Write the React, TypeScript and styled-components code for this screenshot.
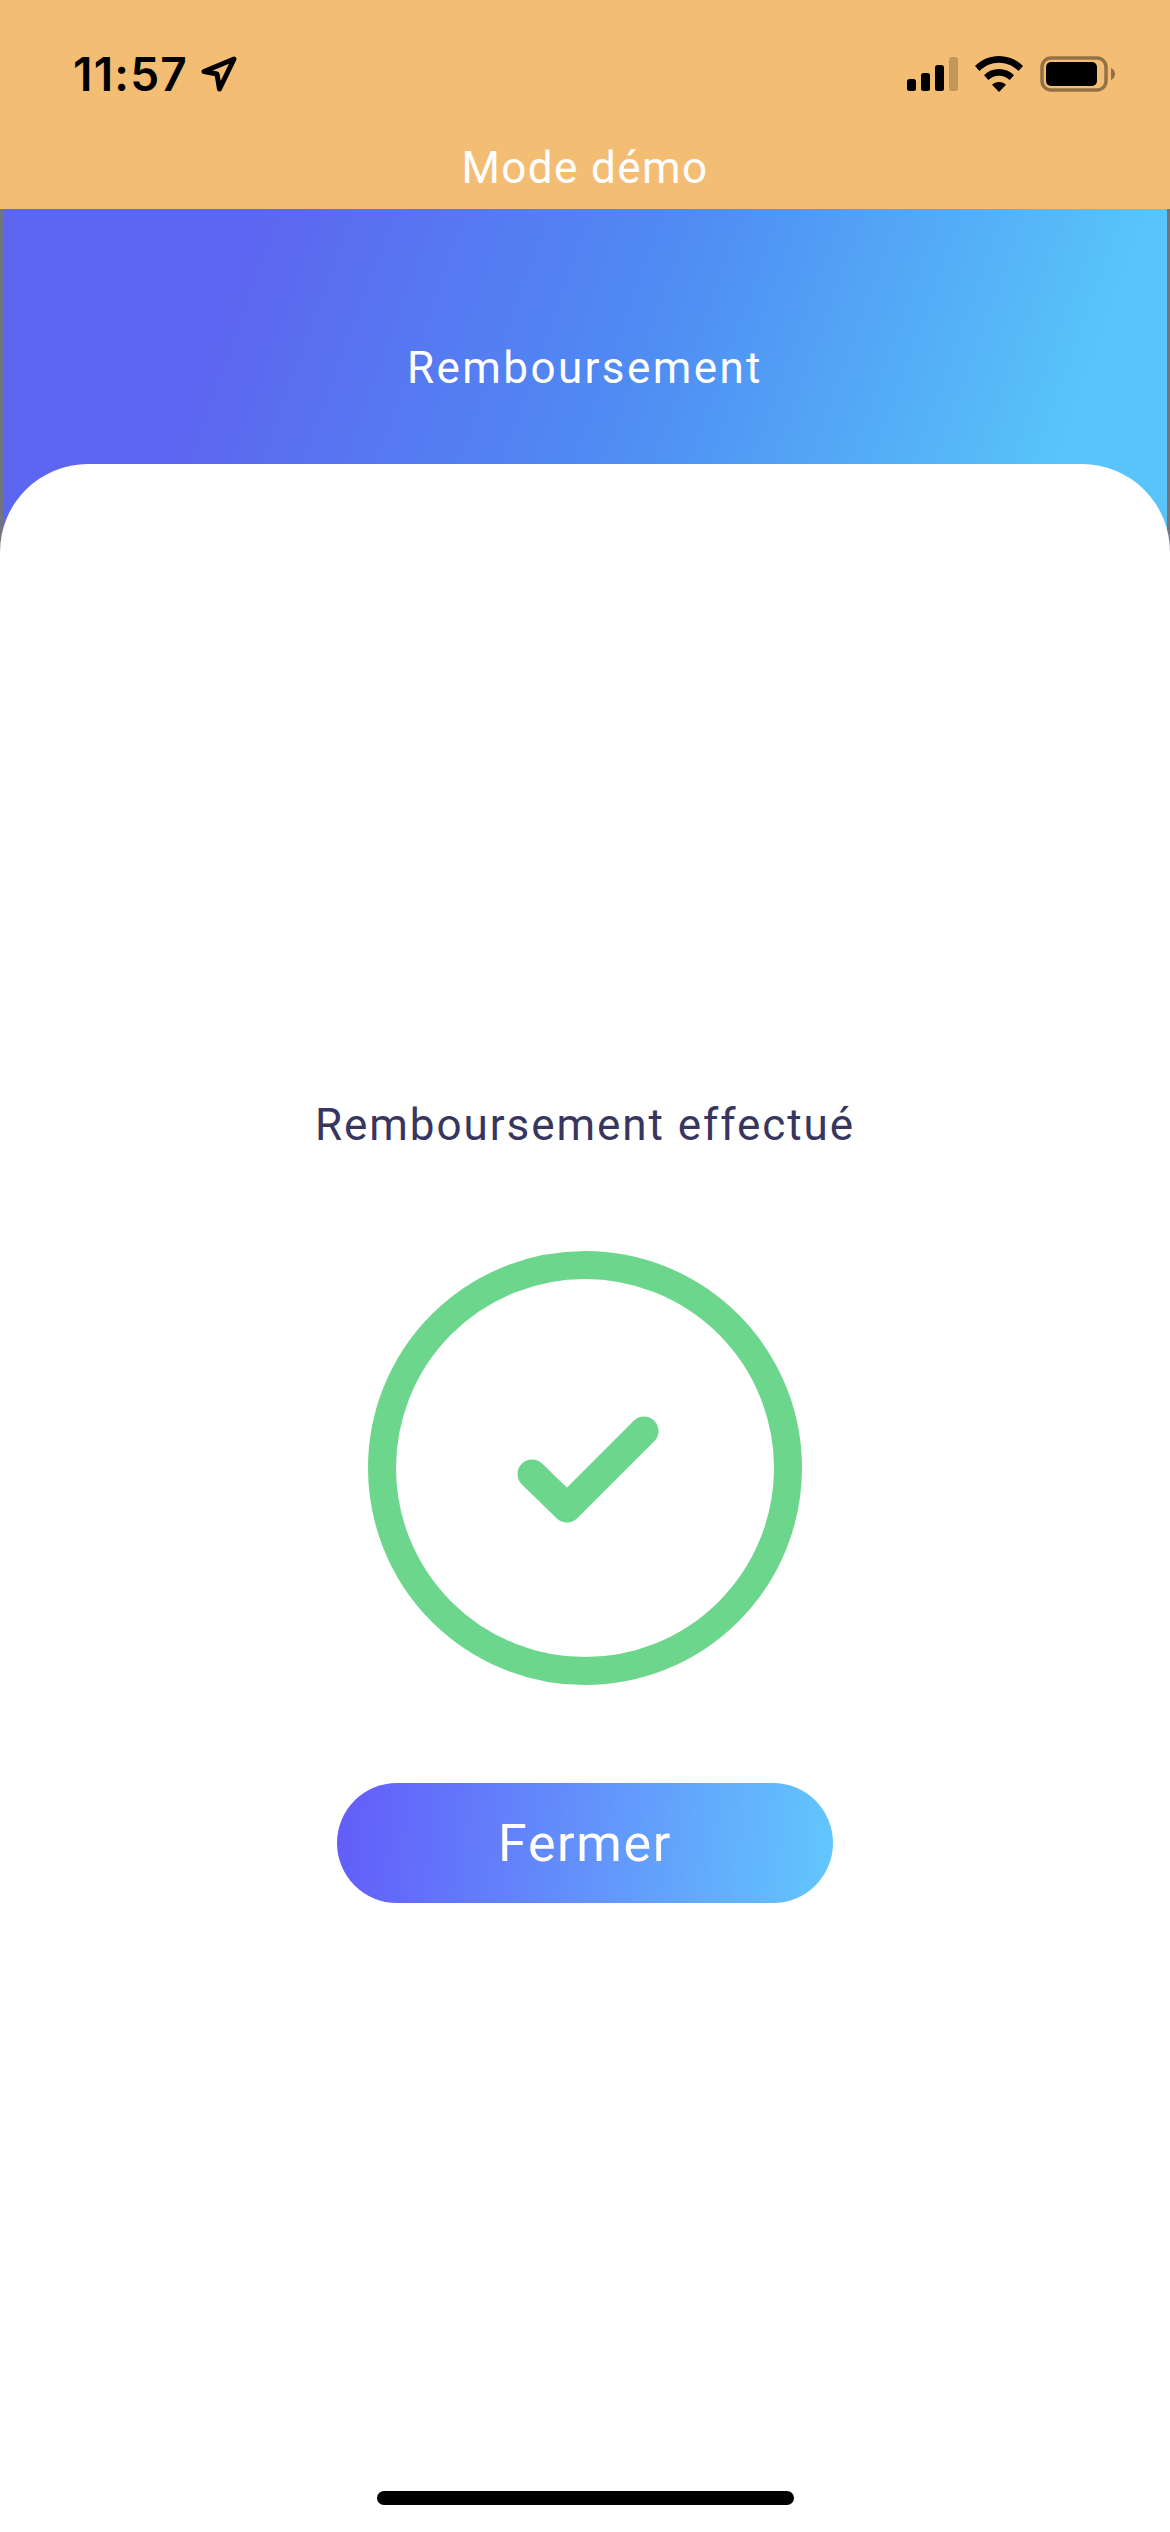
import React from 'react';
import styled, {createGlobalStyle} from "styled-components";

const GlobalStyle = createGlobalStyle`
    html, body {
      margin: 0;
      padding: 0;
      background: #FFFFFF;
    }
`

const Screen = styled.div`
    position: relative;
    display: flex;
    flex-direction: column;
    width: 1170px;
    height: 2532px;
    overflow: hidden;
    font-family: "Roboto", "Liberation Sans", sans-serif;
`

const TopBar = styled.div`
    display: flex;
    flex-direction: column;
    height: 209px;
    background: #F4BD74;
`

const StatusRow = styled.div`
    display: flex;
    justify-content: space-between;
    align-items: center;
    height: 148px;
    padding: 0 55px 0 73px;
    box-sizing: border-box;
`

const TimeGroup = styled.div`
    display: flex;
    align-items: center;
    gap: 13px;
`

const TimeText = styled.span`
    font-family: "Inter", "Liberation Sans", sans-serif;
    font-weight: 600;
    font-size: 46px;
    line-height: 50px;
    letter-spacing: 1.2px;
    color: #000000;
`

const StatusIcons = styled.div`
    display: flex;
    align-items: center;
    gap: 17px;
`

const DemoLabel = styled.div`
    margin-top: -5px;
    text-align: center;
    font-size: 44px;
    line-height: 50px;
    letter-spacing: 1.4px;
    color: #FFFFFF;
`

const Header = styled.div`
    height: 343px;
    padding-top: 132px;
    box-sizing: border-box;
    border-left: 3px solid #72757F;
    border-right: 3px solid #72757F;
    background: linear-gradient(110deg, #5D66F0 20%, #4F8CF3 54%, #58C4F9 89%);
    text-align: center;
    font-size: 44px;
    line-height: 54px;
    letter-spacing: 2.4px;
    color: #FFFFFF;
`

const Sheet = styled.div`
    flex: 1;
    display: flex;
    flex-direction: column;
    align-items: center;
    margin-top: -88px;
    padding-top: 634px;
    border-radius: 88px 88px 0 0;
    background: #FFFFFF;
`

const Message = styled.div`
    font-size: 44px;
    line-height: 54px;
    letter-spacing: 1.95px;
    color: #38365F;
`

const ResultIcon = styled.svg`
    display: block;
    margin-top: 99px;
`

const CloseButton = styled.button`
    width: 496px;
    height: 120px;
    margin-top: 98px;
    padding: 0;
    border: 0;
    border-radius: 60px;
    background: linear-gradient(95deg, #635CF9 0%, #62C7FD 100%);
    font-family: inherit;
    font-size: 52px;
    letter-spacing: 1.6px;
    color: #FFFFFF;
`

const HomeIndicator = styled.div`
    position: absolute;
    left: 377px;
    bottom: 27px;
    width: 417px;
    height: 14px;
    border-radius: 7px;
    background: #000000;
`

const App = () => {
    return (
        <Screen>
            <GlobalStyle/>
            <TopBar>
                <StatusRow>
                    <TimeGroup>
                        <TimeText>11:57</TimeText>
                        <svg width="36" height="36" viewBox="0 0 36 36" fill="none">
                            <path d="M3 15.5 L33 3 L18.500 33 L16 18 Z" stroke="#000" strokeWidth="5" strokeLinejoin="round"/>
                        </svg>
                    </TimeGroup>
                    <StatusIcons>
                        <svg width="51" height="34" viewBox="0 0 51 34">
                            <rect x="0" y="22" width="9" height="12" rx="2.5" fill="#000"/>
                            <rect x="14" y="16" width="9" height="18" rx="2.5" fill="#000"/>
                            <rect x="28" y="8" width="9" height="26" rx="2.5" fill="#000"/>
                            <rect x="42" y="0" width="9" height="34" rx="2.5" fill="#000" opacity="0.2"/>
                        </svg>
                        <svg width="48" height="36" viewBox="0 0 48 36">
                            <path d="M24 0 C33 0 41.500 3.500 48 10 L43.500 15 C38 9.700 31.300 6.800 24 6.800 C16.700 6.800 10 9.700 4.500 15 L0 10 C6.500 3.500 15 0 24 0 Z" fill="#000"/>
                            <path d="M24 13 C29.800 13 35 15.200 39 19.200 L34.600 24 C31.700 21.200 28 19.700 24 19.700 C20 19.700 16.300 21.200 13.400 24 L9 19.200 C13 15.200 18.200 13 24 13 Z" fill="#000"/>
                            <path d="M24 26 C26.800 26 29 27 31 28.800 L24 36 L17 28.800 C19 27 21.200 26 24 26 Z" fill="#000"/>
                        </svg>
                        <svg width="75" height="36" viewBox="0 0 75 36">
                            <rect x="2" y="2" width="64" height="32" rx="9" fill="none" stroke="#000" strokeWidth="3.500" opacity="0.4"/>
                            <rect x="6" y="6" width="51" height="24" rx="5" fill="#000"/>
                            <path d="M71 12 C73.500 13 75 15 75 18 C75 21 73.500 23 71 24 Z" fill="#000" opacity="0.4"/>
                        </svg>
                    </StatusIcons>
                </StatusRow>
                <DemoLabel>Mode démo</DemoLabel>
            </TopBar>
            <Header>Remboursement</Header>
            <Sheet>
                <Message>Remboursement effectué</Message>
                <ResultIcon width="434" height="434" viewBox="0 0 434 434" fill="none">
                    <circle cx="217" cy="217" r="203" stroke="#6BD68C" strokeWidth="28"/>
                    <path d="M164 223 L199 257 L276 180" stroke="#6BD68C" strokeWidth="29" strokeLinecap="round" strokeLinejoin="round"/>
                </ResultIcon>
                <CloseButton>Fermer</CloseButton>
            </Sheet>
            <HomeIndicator/>
        </Screen>
    );
};

export default App;
